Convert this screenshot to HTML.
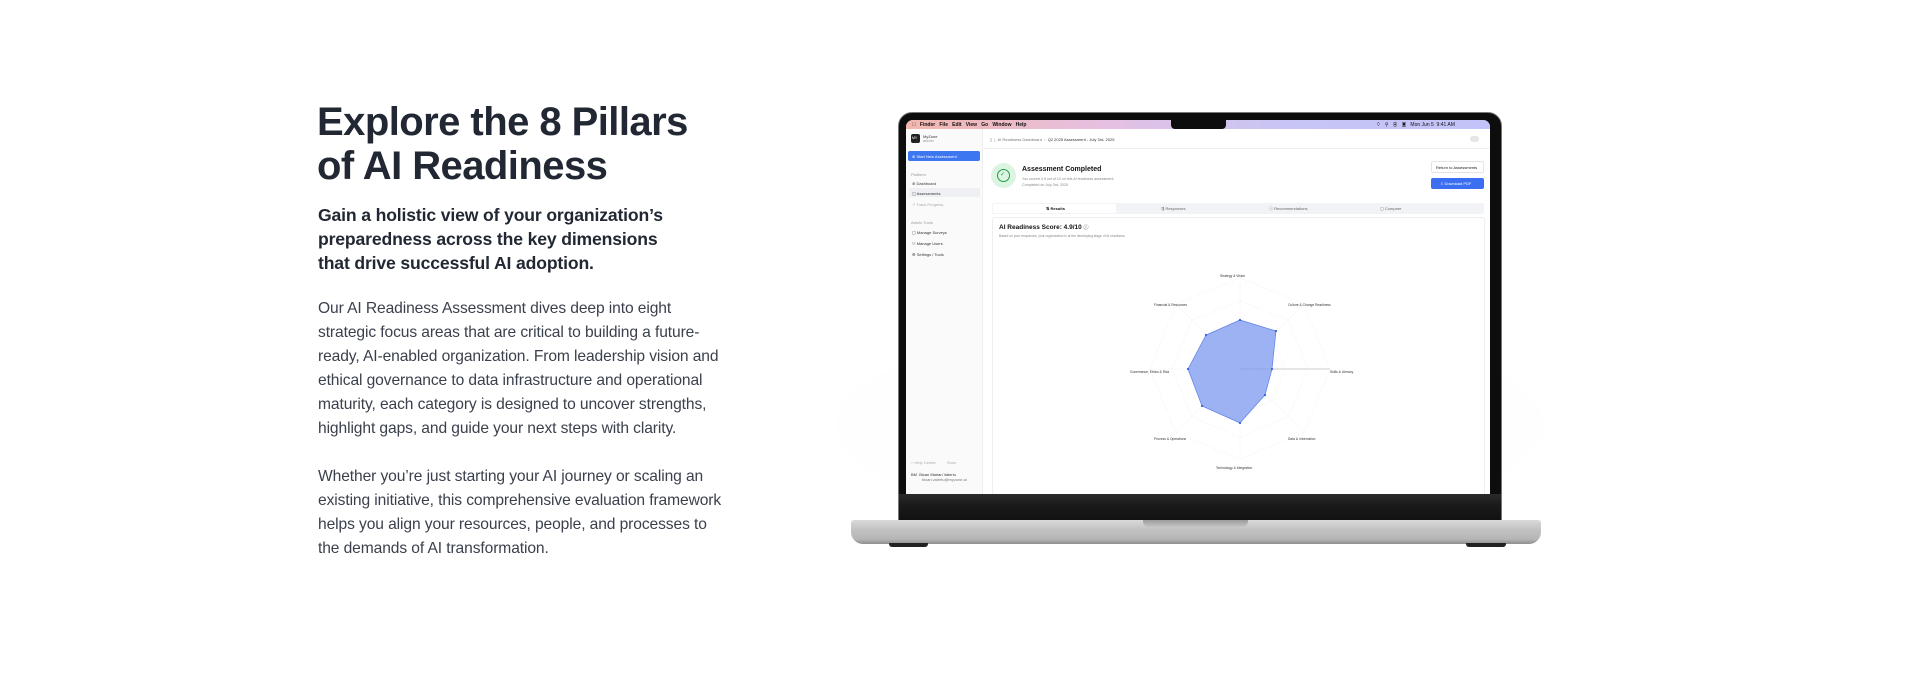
<!DOCTYPE html>
<html><head><meta charset="utf-8"><style>
*{margin:0;padding:0;box-sizing:border-box}
body{width:1920px;height:680px;background:#fff;font-family:"Liberation Sans",sans-serif;position:relative;overflow:hidden;color:#1f2430}
.a{position:absolute}
h1{position:absolute;left:317px;top:100px;font-size:40px;line-height:44px;font-weight:700;letter-spacing:-0.55px;color:#222833}
.sub{position:absolute;left:318px;top:203px;font-size:17.6px;line-height:24px;font-weight:700;letter-spacing:-0.15px;color:#222833}
.body{position:absolute;left:318px;font-size:15.6px;line-height:24px;color:#3a404c;letter-spacing:-0.1px}
.t{position:absolute;white-space:nowrap;color:#333;font-size:4px}
</style></head><body>
<h1>Explore the 8 Pillars<br>of AI Readiness</h1>
<div class="sub">Gain a holistic view of your organization’s<br>preparedness across the key dimensions<br>that drive successful AI adoption.</div>
<div class="body" style="top:297px">Our AI Readiness Assessment dives deep into eight<br>strategic focus areas that are critical to building a future-<br>ready, AI-enabled organization. From leadership vision and<br>ethical governance to data infrastructure and operational<br>maturity, each category is designed to uncover strengths,<br>highlight gaps, and guide your next steps with clarity.</div>
<div class="body" style="top:465px">Whether you’re just starting your AI journey or scaling an<br>existing initiative, this comprehensive evaluation framework<br>helps you align your resources, people, and processes to<br>the demands of AI transformation.</div>

<!-- shadow -->
<div class="a" style="left:770px;top:300px;width:840px;height:250px;background:radial-gradient(ellipse at center,rgba(0,0,0,0.025),rgba(0,0,0,0) 65%)"></div>
<!-- lid -->
<div class="a" style="left:898px;top:112px;width:604px;height:410px;background:#0d0d0d;border-radius:14px 14px 0 0;border:1px solid #777"></div>
<!-- screen -->
<div class="a" style="left:906px;top:120px;width:584px;height:374px;background:#fff;border-radius:7px 7px 0 0;overflow:hidden">
  <div class="a" style="left:0;top:0;width:584px;height:9px;background:linear-gradient(90deg,#f3b7ae,#e5c0e3 35%,#c7c5f5 65%,#c2c3f8)"></div>
  <div class="t" style="left:6px;top:2px;font-size:5px;font-weight:700;color:#111">&#63743;&nbsp;&nbsp; Finder&nbsp;&nbsp; File&nbsp;&nbsp; Edit&nbsp;&nbsp; View&nbsp;&nbsp; Go&nbsp;&nbsp; Window&nbsp;&nbsp; Help</div>
  <div class="t" style="left:470px;top:2px;font-size:5px;color:#111">⌔&nbsp;&nbsp; ⚲&nbsp;&nbsp; ◉&nbsp;&nbsp; ▣&nbsp;&nbsp; Mon Jun 5&nbsp; 9:41 AM</div>
  <div class="a" style="left:265px;top:-1px;width:55px;height:10px;background:#0d0d0d;border-radius:0 0 4px 4px"></div>
  <!-- sidebar -->
  <div class="a" style="left:0;top:9px;width:77px;height:365px;background:#fafafa;border-right:1px solid #eee"></div>
  <div class="a" style="left:5px;top:14px;width:9px;height:9px;background:#222;border-radius:2px"></div>
  <div class="t" style="left:6px;top:16px;color:#fff;font-size:3.5px">MY</div>
  <div class="t" style="left:17px;top:14px">MyZone</div>
  <div class="t" style="left:17px;top:18px;color:#999">admin</div>
  <div class="a" style="left:2px;top:31px;width:72px;height:10px;background:#3d76f1;border-radius:2px"></div>
  <div class="t" style="left:6px;top:34px;color:#fff">⊕ Start New Assessment</div>
  <div class="t" style="left:5px;top:52px;color:#999">Platform</div>
  <div class="t" style="left:6px;top:61px">⊚ Dashboard</div>
  <div class="a" style="left:3px;top:68px;width:71px;height:9px;background:#eef0f3;border-radius:2px"></div>
  <div class="t" style="left:6px;top:71px">▢ Assessments</div>
  <div class="t" style="left:6px;top:82px;color:#aaa">↗ Track Progress</div>
  <div class="t" style="left:5px;top:100px;color:#999">Admin Tools</div>
  <div class="t" style="left:6px;top:110px">▢ Manage Surveys</div>
  <div class="t" style="left:6px;top:121px">⚇ Manage Users</div>
  <div class="t" style="left:6px;top:132px">⚙ Settings / Tools</div>
  <div class="t" style="left:5px;top:340px;color:#aaa">⌂ Help Center&nbsp;&nbsp;&nbsp;&nbsp;&nbsp;&nbsp;&nbsp;&nbsp;&nbsp; Soon</div>
  <div class="t" style="left:5px;top:352px">BM&nbsp; Bican Marian Valeriu</div>
  <div class="t" style="left:16px;top:357px;color:#777">bican.valeriu@myzone.ai</div>
  <!-- header -->
  <div class="a" style="left:78px;top:28px;width:506px;height:1px;background:#eee"></div>
  <div class="t" style="left:84px;top:17px;color:#777">▯ &nbsp;|&nbsp; AI Readiness Dashboard &nbsp;›&nbsp; <span style="color:#333">Q2 2025 Assessment - July 3rd, 2025</span></div>
  <div class="a" style="left:564px;top:16px;width:9px;height:6px;border-radius:3px;background:#e6e6e6"></div>
  <!-- completed -->
  <div class="a" style="left:85px;top:43px;width:25px;height:25px;border-radius:50%;background:#dcf5e2"></div>
  <div class="a" style="left:91px;top:49px;width:13px;height:13px;border-radius:50%;border:1.3px solid #1f9d47"></div>
  <div class="t" style="left:94px;top:51px;font-size:6px;color:#1f9d47">✓</div>
  <div class="t" style="left:116px;top:46px;font-size:7px;font-weight:700;color:#111">Assessment Completed</div>
  <div class="t" style="left:116px;top:57px;color:#888;font-size:3.6px">You scored 4.9 out of 10 on this AI readiness assessment.</div>
  <div class="t" style="left:116px;top:63px;color:#888;font-size:3.6px">Completed on July 3rd, 2025</div>
  <div class="a" style="left:525px;top:41px;width:53px;height:12px;border:1px solid #e4e4e4;border-radius:2px"></div>
  <div class="t" style="left:530px;top:45px;color:#222">Return to Assessments</div>
  <div class="a" style="left:525px;top:58px;width:53px;height:11px;background:#3b6ef0;border-radius:2px"></div>
  <div class="t" style="left:534px;top:61px;color:#fff">⇩ Download PDF</div>
  <!-- tabs -->
  <div class="a" style="left:86px;top:83px;width:492px;height:11px;background:#f1f3f6;border-radius:2px"></div>
  <div class="a" style="left:87px;top:84px;width:123px;height:9px;background:#fff;border-radius:2px"></div>
  <div class="t" style="left:140px;top:86px;color:#111;font-weight:700">⇅ Results</div>
  <div class="t" style="left:255px;top:86px;color:#666">⇶ Responses</div>
  <div class="t" style="left:363px;top:86px;color:#666">ⓘ Recommendations</div>
  <div class="t" style="left:474px;top:86px;color:#666">▢ Compare</div>
  <!-- chart card -->
  <div class="a" style="left:86px;top:97px;width:493px;height:290px;border:1px solid #eee;border-radius:3px"></div>
  <div class="t" style="left:93px;top:104px;font-size:6.5px;font-weight:700;color:#111">AI Readiness Score: 4.9/10 <span style="font-weight:400;font-size:5px">ⓘ</span></div>
  <div class="t" style="left:93px;top:114px;color:#888;font-size:3.3px">Based on your responses, your organization is at the developing stage of AI readiness.</div>
  <svg class="a" style="left:184px;top:140px" width="300" height="230" viewBox="184 140 300 230">
    <g fill="none" stroke="#eee" stroke-width="0.6" stroke-dasharray="1.5 1.5">
      <polygon points="334,158 398,184 424,249 398,313 334,339 270,313 244,249 270,184"/>
      <polygon points="334,181 382,200 402,249 382,297 334,317 286,297 266,249 286,200"/>
      <polygon points="334,204 366,216 379,249 366,281 334,294 302,281 289,249 302,216"/>
      <polygon points="334,226 350,233 357,249 350,265 334,272 318,265 311,249 318,233"/>
      <line x1="334" y1="158" x2="334" y2="339"/><line x1="244" y1="249" x2="424" y2="249"/>
      <line x1="270" y1="184" x2="398" y2="313"/><line x1="398" y1="184" x2="270" y2="313"/>
    </g>
    <line x1="334" y1="249" x2="424" y2="249" stroke="#ddd" stroke-width="1.5"/>
    <polygon points="334,200 370,211 366,249 359,275 334,303 296,286 282,249 300,215" fill="#7b98ee" fill-opacity="0.75" stroke="#5b7ee8" stroke-width="0.7"/>
    <g fill="#2f62ea"><circle cx="334" cy="200" r="1.1"/><circle cx="370" cy="211" r="1.1"/><circle cx="366" cy="249" r="1.1"/><circle cx="359" cy="275" r="1.1"/><circle cx="334" cy="303" r="1.1"/><circle cx="296" cy="286" r="1.1"/><circle cx="282" cy="249" r="1.1"/><circle cx="300" cy="215" r="1.1"/></g>
  </svg>
  <div class="t" style="left:314px;top:154px;font-size:3.3px">Strategy &amp; Vision</div>
  <div class="t" style="left:382px;top:183px;font-size:3.3px">Culture &amp; Change Readiness</div>
  <div class="t" style="left:424px;top:250px;font-size:3.3px">Skills &amp; Literacy</div>
  <div class="t" style="left:382px;top:317px;font-size:3.3px">Data &amp; Information</div>
  <div class="t" style="left:310px;top:346px;font-size:3.3px">Technology &amp; Integration</div>
  <div class="t" style="left:248px;top:317px;font-size:3.3px">Process &amp; Operations</div>
  <div class="t" style="left:224px;top:250px;font-size:3.3px">Governance, Ethics &amp; Risk</div>
  <div class="t" style="left:248px;top:183px;font-size:3.3px">Financial &amp; Resources</div>
</div>
<!-- chin -->
<div class="a" style="left:899px;top:494px;width:602px;height:27px;background:linear-gradient(#2b2b2b,#1a1a1a 40%,#111)"></div>
<!-- base -->
<div class="a" style="left:851px;top:520px;width:690px;height:24px;background:linear-gradient(#d9d9d9,#c2c2c2 40%,#b5b5b5 80%,#8f8f8f);border-radius:3px 3px 12px 12px"></div>
<div class="a" style="left:1143px;top:520px;width:105px;height:7px;background:linear-gradient(#9c9c9c,#c4c4c4);border-radius:0 0 6px 6px"></div>
<div class="a" style="left:889px;top:543px;width:39px;height:4px;background:#222;border-radius:0 0 3px 3px"></div>
<div class="a" style="left:1466px;top:543px;width:40px;height:4px;background:#222;border-radius:0 0 3px 3px"></div>
</body></html>
